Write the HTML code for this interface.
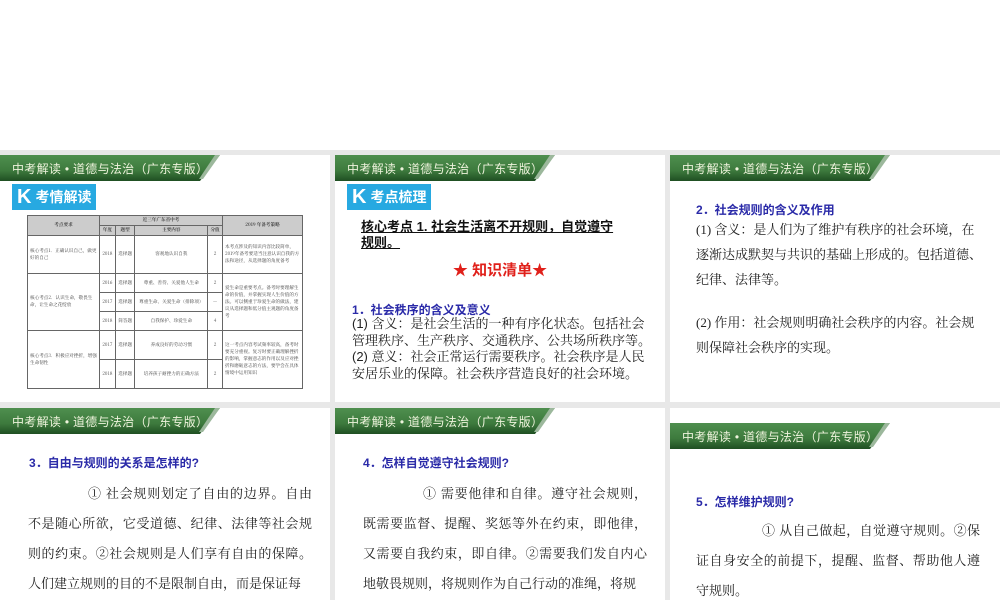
<!DOCTYPE html>
<html><head><meta charset="utf-8"><style>
*{margin:0;padding:0;box-sizing:border-box}
body{width:1000px;height:600px;background:#fff;position:relative;overflow:hidden;font-family:"Liberation Sans","Noto Sans CJK SC",sans-serif}
.gray{position:absolute;background:#e8e8e8}
.p{position:absolute;background:#fff;overflow:hidden}
.ban{position:absolute;left:0;width:222px;height:26px;}
.ban svg{position:absolute;left:0;top:0}
.ban span{position:absolute;left:12px;top:5px;font-size:12px;color:#eef3dc;white-space:nowrap;letter-spacing:0.3px}
.kb{position:absolute;left:12px;top:29px;height:26px;background:#27a9e1;color:#fff;font-weight:bold;font-size:14px;padding:0 5px;line-height:26px;white-space:nowrap}
.kb b{font-size:20px;margin-right:4px;vertical-align:-1px}
.h{position:absolute;color:#2a2aa8;font-weight:bold;font-size:12px;white-space:nowrap}
.t{position:absolute;font-family:"Liberation Serif","Noto Serif CJK SC",serif;font-size:13px;color:#222}
table{position:absolute;left:27px;top:215px;width:276px;border-collapse:collapse;font-family:"Noto Serif CJK SC",serif;font-size:4.6px;color:#444}
td{border:0.8px solid #666;padding:1px 2px;line-height:7px;text-align:center}
.hd td{background:#ccc;font-weight:bold}
td.l{text-align:left}
</style></head><body>
<div class="gray" style="left:0;top:150px;width:1000px;height:5px"></div>
<div class="gray" style="left:0;top:402px;width:1000px;height:6px"></div>
<div class="gray" style="left:330px;top:150px;width:5px;height:450px"></div>
<div class="gray" style="left:665px;top:150px;width:5px;height:450px"></div>

<div class="p" style="left:0;top:155px;width:330px;height:247px">
<div class="ban" style="top:0"><svg width="222" height="26"><defs><linearGradient id="g" x1="0" y1="0" x2="0" y2="1"><stop offset="0" stop-color="#4f8f4f"/><stop offset="0.6" stop-color="#3d7a3d"/><stop offset="1" stop-color="#1f4f22"/></linearGradient></defs><polygon points="0,0 220,0 200,26 0,26" fill="url(#g)"/><polygon points="215,0 220,0 203,24 199,24" fill="#9cb89c"/></svg><span>中考解读 • 道德与法治（广东专版）</span></div>
<div class="kb"><b>K</b>考情解读</div>
<table style="top:60px">
<tr class="hd"><td rowspan="2" style="width:72px">考点要求</td><td colspan="4">近三年广东省中考</td><td rowspan="2" style="width:80px">2019 年备考策略</td></tr>
<tr class="hd"><td>年度</td><td>题型</td><td>主要内容</td><td>分值</td></tr>
<tr><td class="l" style="height:38px">核心考点1．正确认识自己，做更好的自己</td><td>2018</td><td>选择题</td><td>客观地认识自我</td><td>2</td><td class="l">本考点涉及的知识内容比较简单，2019年备考要适当注意认识自我的方法和途径，从选择题的角度备考</td></tr>
<tr><td class="l" rowspan="3">核心考点2．认识生命，敬畏生命，让生命之花绽放</td><td style="height:19px">2016</td><td>选择题</td><td>尊重、善待、关爱他人生命</td><td>2</td><td class="l" rowspan="3">爱生命是重要考点。备考时要理解生命的价值，并掌握实现人生价值的方法。可以侧重于珍爱生命的做法，建议从选择题和低分值主观题的角度备考</td></tr>
<tr><td style="height:19px">2017</td><td>选择题</td><td>尊重生命、关爱生命（排除项）</td><td>—</td></tr>
<tr><td style="height:19px">2018</td><td>简答题</td><td>自我保护、珍爱生命</td><td>4</td></tr>
<tr><td class="l" rowspan="2">核心考点3．积极应对挫折，增强生命韧性</td><td style="height:29px">2017</td><td>选择题</td><td>养成良好的劳动习惯</td><td>2</td><td class="l" rowspan="2">这一考点内容考试频率较高，备考时要充分重视。复习时要正确理解挫折的影响，掌握意志的作用以及应对挫折和磨砺意志的方法，要学会在具体情境中运用知识</td></tr>
<tr><td style="height:29px">2018</td><td>选择题</td><td>培养孩子耐挫力的正确方法</td><td>2</td></tr>
</table>
</div>

<div class="p" style="left:335px;top:155px;width:330px;height:247px">
<div class="ban" style="top:0"><svg width="222" height="26"><polygon points="0,0 220,0 200,26 0,26" fill="url(#g)"/><polygon points="215,0 220,0 203,24 199,24" fill="#9cb89c"/></svg><span>中考解读 • 道德与法治（广东专版）</span></div>
<div class="kb"><b>K</b>考点梳理</div>
<div style="position:absolute;left:26px;top:64px;font-size:13px;font-weight:bold;color:#111;line-height:16px;width:258px;text-decoration:underline">核心考点 1. 社会生活离不开规则，自觉遵守规则。</div>
<div style="position:absolute;left:0;width:330px;text-align:center;top:104px;font-size:15px;font-weight:bold;color:#e0201a">★ 知识清单★</div>
<div class="h" style="left:17px;top:146px">1．社会秩序的含义及意义</div>
<div style="position:absolute;left:17px;top:161px;width:300px;font-size:13px;line-height:16.5px;color:#222;font-family:'Liberation Sans','Noto Serif CJK SC',serif">(1) 含义：是社会生活的一种有序化状态。包括社会管理秩序、生产秩序、交通秩序、公共场所秩序等。<br>(2) 意义：社会正常运行需要秩序。社会秩序是人民安居乐业的保障。社会秩序营造良好的社会环境。</div>
</div>

<div class="p" style="left:670px;top:155px;width:330px;height:247px">
<div class="ban" style="top:0"><svg width="222" height="26"><polygon points="0,0 220,0 200,26 0,26" fill="url(#g)"/><polygon points="215,0 220,0 203,24 199,24" fill="#9cb89c"/></svg><span>中考解读 • 道德与法治（广东专版）</span></div>
<div class="h" style="left:26px;top:46px">2．社会规则的含义及作用</div>
<div class="t" style="left:26px;top:62px;width:290px;line-height:25px">(1) 含义：是人们为了维护有秩序的社会环境，在逐渐达成默契与共识的基础上形成的。包括道德、纪律、法律等。</div>
<div class="t" style="left:26px;top:155px;width:290px;line-height:25px">(2) 作用：社会规则明确社会秩序的内容。社会规则保障社会秩序的实现。</div>
</div>

<div class="p" style="left:0;top:408px;width:330px;height:192px">
<div class="ban" style="top:0"><svg width="222" height="26"><polygon points="0,0 220,0 200,26 0,26" fill="url(#g)"/><polygon points="215,0 220,0 203,24 199,24" fill="#9cb89c"/></svg><span>中考解读 • 道德与法治（广东专版）</span></div>
<div class="h" style="left:29px;top:46px">3．自由与规则的关系是怎样的?</div>
<div class="t" style="left:28px;top:71px;width:284px;line-height:30px;text-align:justify;text-indent:60px">① 社会规则划定了自由的边界。自由不是随心所欲，它受道德、纪律、法律等社会规则的约束。②社会规则是人们享有自由的保障。人们建立规则的目的不是限制自由，而是保证每</div>
</div>

<div class="p" style="left:335px;top:408px;width:330px;height:192px">
<div class="ban" style="top:0"><svg width="222" height="26"><polygon points="0,0 220,0 200,26 0,26" fill="url(#g)"/><polygon points="215,0 220,0 203,24 199,24" fill="#9cb89c"/></svg><span>中考解读 • 道德与法治（广东专版）</span></div>
<div class="h" style="left:28px;top:46px">4．怎样自觉遵守社会规则?</div>
<div class="t" style="left:28px;top:71px;width:284px;line-height:30px;text-align:justify;text-indent:60px">① 需要他律和自律。遵守社会规则，既需要监督、提醒、奖惩等外在约束，即他律，又需要自我约束，即自律。②需要我们发自内心地敬畏规则，将规则作为自己行动的准绳，将规</div>
</div>

<div class="p" style="left:670px;top:408px;width:330px;height:192px">
<div class="ban" style="top:15px"><svg width="222" height="26"><polygon points="0,0 220,0 200,26 0,26" fill="url(#g)"/><polygon points="215,0 220,0 203,24 199,24" fill="#9cb89c"/></svg><span>中考解读 • 道德与法治（广东专版）</span></div>
<div class="h" style="left:26px;top:85px">5．怎样维护规则?</div>
<div class="t" style="left:26px;top:108px;width:284px;line-height:30px;text-align:justify;text-indent:66px">① 从自己做起，自觉遵守规则。②保证自身安全的前提下，提醒、监督、帮助他人遵守规则。</div>
</div>
</body></html>
